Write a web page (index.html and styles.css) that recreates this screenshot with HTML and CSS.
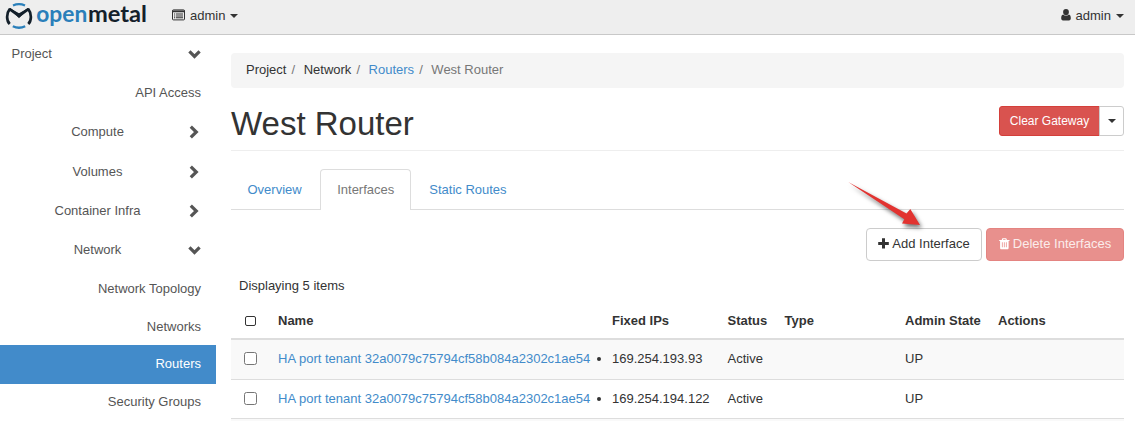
FILE: index.html
```html
<!DOCTYPE html>
<html lang="en">
<head>
<meta charset="utf-8">
<title>West Router - OpenMetal</title>
<link rel="stylesheet" href="styles.css">
</head>
<body>
<svg class="defs" width="0" height="0">
  <symbol id="chev-right" viewBox="0 0 12 14"><path d="M2.300 1.600 L7.800 7 L2.300 12.400" fill="none" stroke="currentColor" stroke-width="3.200"/></symbol>
  <symbol id="chev-down" viewBox="0 0 12 14"><path d="M.9 4.400 L6 9.400 L11.100 4.400" fill="none" stroke="currentColor" stroke-width="3.200"/></symbol>
</svg>
<header class="navbar">
  <a class="brand">
    <svg class="logo" width="150" height="34" viewBox="0 0 150 34">
      <g fill="none">
        <path d="M9.700 24 C6.300 20.500 6.200 13.500 9.700 9.200 L19 15.800 L28.300 9.200 C31.800 13.500 31.700 20.500 28.300 24" stroke="#14202b" stroke-width="2.700" stroke-linejoin="bevel"/>
        <path d="M13 5.500 Q19 2.900 25 5.500 M12.800 26.300 Q19 29.200 25.200 26.300" stroke="#2a7fba" stroke-width="2.300"/>
      </g>
      <path d="M9.500 8 L19 13.300 L28.500 8 L19 18.200Z" fill="#14202b"/>
      <text class="logo-text logo-open" x="36.300" y="21.500" textLength="51" lengthAdjust="spacingAndGlyphs">open</text>
      <text class="logo-text logo-metal" x="88" y="21.500" textLength="59" lengthAdjust="spacingAndGlyphs">metal</text>
    </svg>
  </a>
  <a class="nav-item">
    <svg class="nav-icon" width="13" height="12" viewBox="0 0 13 12"><rect x=".5" y=".9" width="12" height="10" rx=".9" fill="none" stroke="#333"/><path d="M0 1.500h13v1.800H0zM2 4.500h1.200v1H2zM4 4.500h7v1H4zM2 6.400h1.200v1H2zM4 6.400h7v1H4zM2 8.300h1.200v1H2zM4 8.300h7v1H4z" fill="#333"/></svg>
    <span>admin</span><i class="caret"></i>
  </a>
  <a class="nav-item nav-user">
    <svg class="nav-icon" width="10" height="12" viewBox="0 0 10 12"><path d="M5 0a2.900 3 0 0 1 2.900 3A2.900 3 0 0 1 5 6.100 2.900 3 0 0 1 2.100 3 2.900 3 0 0 1 5 0zM2.200 5.400C3.800 7 6.200 7 7.800 5.400 9.400 5.700 9.800 7.400 9.800 9.200c0 1.300-.7 2.200-1.800 2.200H2c-1.100 0-1.800-.9-1.800-2.200 0-1.800.4-3.500 2-3.800z" fill="#333"/></svg>
    <span>admin</span><i class="caret"></i>
  </a>
</header>
<div class="layout">
  <nav class="sidebar">
    <div class="side-row root"><span>Project</span><svg class="chev"><use href="#chev-down"/></svg></div>
    <div class="side-row leaf">API Access</div>
    <div class="side-row group tall"><span>Compute</span><svg class="chev"><use href="#chev-right"/></svg></div>
    <div class="side-row group"><span>Volumes</span><svg class="chev"><use href="#chev-right"/></svg></div>
    <div class="side-row group"><span>Container Infra</span><svg class="chev"><use href="#chev-right"/></svg></div>
    <div class="side-row group"><span>Network</span><svg class="chev"><use href="#chev-down"/></svg></div>
    <div class="side-row leaf">Network Topology</div>
    <div class="side-row leaf short">Networks</div>
    <div class="side-row leaf active">Routers</div>
    <div class="side-row leaf last">Security Groups</div>
  </nav>
  <main class="content">
    <ol class="breadcrumb"><li>Project</li><li>Network</li><li><a>Routers</a></li><li class="current">West Router</li></ol>
    <div class="page-header">
      <h1>West Router</h1>
      <div class="btn-group"><button class="btn-clear">Clear Gateway</button><button class="btn-more"><i class="caret"></i></button></div>
    </div>
    <div class="tabs"><a class="tab first">Overview</a><a class="tab selected">Interfaces</a><a class="tab">Static Routes</a></div>
    <div class="actions">
      <button class="btn"><svg width="11" height="12" viewBox="0 0 11 12"><path d="M4 .2h3v3.700h3.800v3H7v3.700H4V6.900H.2v-3H4z" fill="#333"/></svg>Add Interface</button>
      <button class="btn danger"><svg width="11" height="12" viewBox="0 0 11 12"><path fill-rule="evenodd" d="M3.400.3h3.800l.8 1.600h2.500v1.200h-.9V10c0 .8-.5 1.300-1.200 1.300H2.300C1.600 11.300 1.100 10.800 1.100 10V3.100H.2V1.900h2.500zM4 1.900h2.700l-.4-.7H4.300zM2.900 4.300v5h.8v-5zM4.900 4.300v5h.8v-5zM6.900 4.300v5h.8v-5z" fill="#fff"/></svg>Delete Interfaces</button>
      <svg class="arrow" width="90" height="60" viewBox="0 0 90 60"><path d="M9.200 12 L67.500 43.600 L71.300 39 L81 55 L63 53.500 L65.300 49.200 Z" fill="#e23330"/></svg>
    </div>
    <div class="count">Displaying 5 items</div>
    <table class="grid">
      <colgroup><col class="c-check"><col class="c-name"><col class="c-ip"><col class="c-status"><col class="c-type"><col class="c-admin"><col></colgroup>
      <thead><tr><th><i class="box small"></i></th><th>Name</th><th>Fixed IPs</th><th>Status</th><th>Type</th><th>Admin State</th><th>Actions</th></tr></thead>
      <tbody>
        <tr class="odd"><td><i class="box raised"></i></td><td><a>HA port tenant 32a0079c75794cf58b084a2302c1ae54</a></td><td><ul><li>169.254.193.93</li></ul></td><td>Active</td><td></td><td>UP</td><td></td></tr>
        <tr class="even"><td><i class="box"></i></td><td><a>HA port tenant 32a0079c75794cf58b084a2302c1ae54</a></td><td><ul><li>169.254.194.122</li></ul></td><td>Active</td><td></td><td>UP</td><td></td></tr>
        <tr class="cut"><td colspan="7"></td></tr>
      </tbody>
    </table>
  </main>
</div>
</body>
</html>
```
FILE: styles.css
```css
* { box-sizing: border-box; }
html, body { height: 421px; overflow: hidden; }
body { margin: 0; font: 13px/18px "Liberation Sans", Arial, sans-serif; color: #333; background: #fff; }
a { color: #428bca; text-decoration: none; }
button { font-family: inherit; margin: 0; }
.defs { display: block; }
.navbar { display: flex; height: 35px; background: #eee; border-bottom: 1px solid #c8c8c8; }
.brand { width: 172px; }
.logo { display: block; }
.logo-text { font-family: Lato, sans-serif; font-size: 22.5px; font-weight: 700; }
.logo-open { fill: #2a7fba; }
.logo-metal { fill: #14202b; }
.nav-item { display: flex; align-items: center; height: 31px; color: #333; }
.nav-item span { margin: 0 5px; }
.nav-icon { margin-bottom: 1px; }
.nav-user { margin-left: auto; margin-right: 11px; }
.caret { display: block; width: 0; height: 0; border: 4px solid transparent; border-top-color: #333; border-bottom: 0; }
.layout { display: flex; }
.sidebar { width: 216px; flex: none; color: #555; }
.side-row { display: flex; align-items: center; height: 39px; padding: 1px 15px 0 0; }
.root { height: 38px; padding: 0 15px 0 11.5px; justify-content: space-between; }
.leaf { justify-content: flex-end; }
.group span { flex: none; width: 195px; text-align: center; }
.group .chev { margin-left: -7px; }
.tall { height: 40px; padding-top: 0; padding-bottom: 1px; }
.short { height: 37px; }
.active { background: #428bca; color: #fff; padding-top: 0; padding-bottom: 1px; }
.last { height: 36px; padding-top: 0; }
.chev { width: 13px; height: 14px; color: #555; flex: none; }
.content { width: 893px; margin-left: 15px; padding-top: 18px; }
.breadcrumb { display: flex; list-style: none; height: 35px; margin: 0 0 18px; padding: 8px 15px; background: #f5f5f5; border-radius: 4px; }
.breadcrumb li + li::before { content: "/"; color: #777; padding: 0 8.6px 0 5px; }
.breadcrumb .current { color: #777; }
.page-header { display: flex; justify-content: space-between; height: 45px; border-bottom: 1px solid #eee; margin-bottom: 18px; }
h1 { margin: 0; font-size: 33px; font-weight: 400; line-height: 36px; }
.btn-group { display: flex; height: 30px; }
.btn-clear { width: 101px; padding: 0; border: 1px solid #d43f3a; border-radius: 3px 0 0 3px; background: #d9534f; color: #fff; font-size: 12px; }
.btn-more { width: 25px; margin-left: -1px; padding: 0 8px; border: 1px solid #ccc; border-radius: 0 3px 3px 0; background: #fff; }
.tabs { display: flex; height: 41px; border-bottom: 1px solid #ddd; }
.tab { height: 41px; padding: 11px 16px; border: 1px solid transparent; border-bottom: 0; margin-right: 1px; }
.first { padding-left: 15.5px; padding-right: 16.5px; }
.selected { background: #fff; color: #777; border-color: #ddd; border-radius: 4px 4px 0 0; }
.actions { position: relative; display: flex; justify-content: flex-end; gap: 4px; margin-top: 18px; }
.btn { display: flex; align-items: center; justify-content: center; gap: 3px; width: 116px; height: 33px; padding: 0 0 2px; border: 1px solid #ccc; border-radius: 4px; background: #fff; color: #333; font-size: 13px; }
.danger { width: 138px; background: #e8908d; border-color: #e48481; color: #fbeceb; }
.arrow { position: absolute; left: 608px; top: -58px; filter: drop-shadow(2px 3px 2px rgba(0,0,0,.55)); }
.count { height: 42px; padding: 16px 8px 0; }
.grid { width: 893px; table-layout: fixed; border-collapse: separate; border-spacing: 0; }
.c-check { width: 39px; }
.c-name { width: 334px; }
.c-ip { width: 115.5px; }
.c-status { width: 57px; }
.c-type { width: 120.5px; }
.c-admin { width: 93px; }
th, td { text-align: left; padding: 0 0 0 8px; white-space: nowrap; }
th { height: 37px; border-bottom: 2px solid #ddd; }
td { height: 39px; padding-bottom: 1px; border-bottom: 1px solid #ddd; }
.odd td { height: 40px; background: #f9f9f9; }
.cut td { height: 2px; padding: 0; border: 0; background: #f9f9f9; }
ul { margin: 0; padding: 0; }
.box { display: block; width: 13px; height: 13px; margin-left: 5px; border: 1px solid #767676; border-radius: 2.5px; background: #fff; }
.box.raised { margin-bottom: 2px; }
.box.small { width: 11px; height: 10px; margin-left: 6px; border-color: #333; border-radius: 2px; }
```
